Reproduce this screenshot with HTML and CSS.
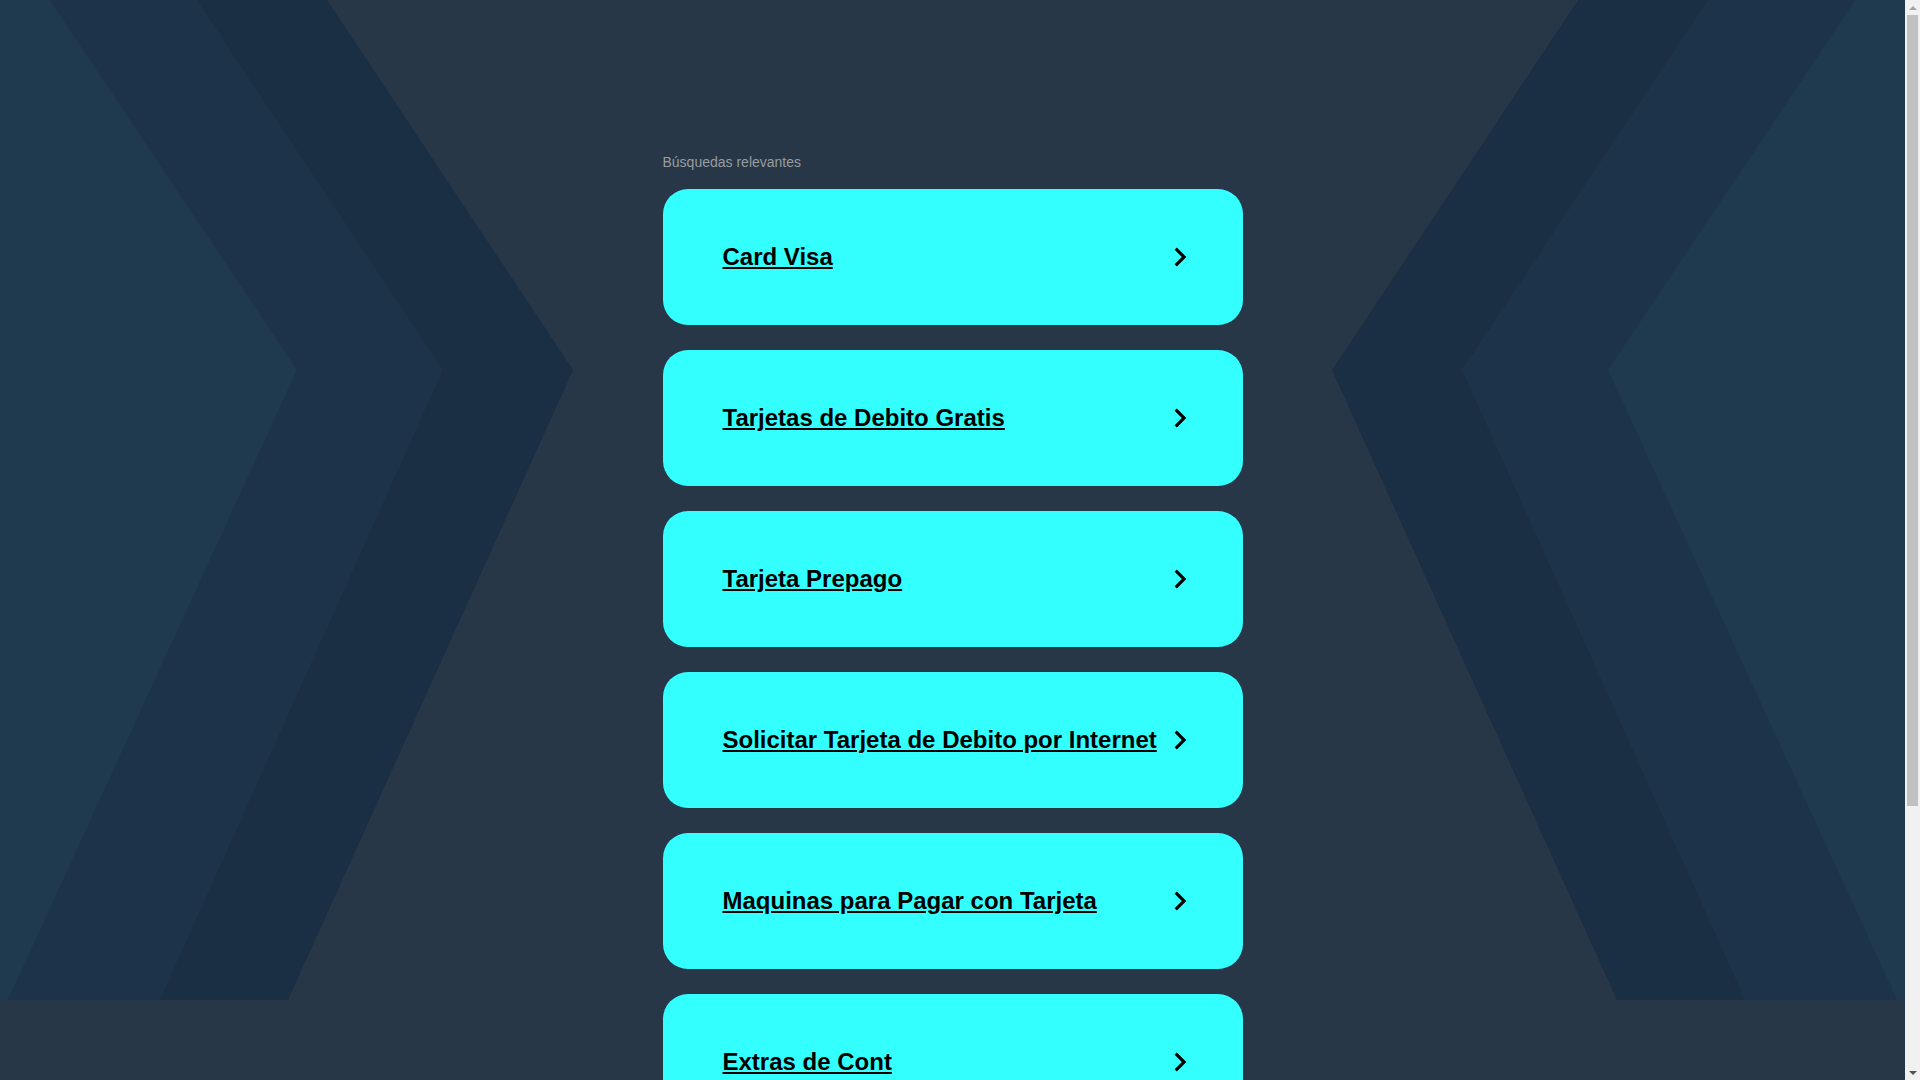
FILE: index.html
```html
<!DOCTYPE html>
<html lang="es">
<head>
<meta charset="utf-8">
<title>Búsquedas relevantes</title>
<link rel="stylesheet" href="styles.css">
</head>
<body>
<div class="backdrop" aria-hidden="true">
  <svg class="backdrop-svg" viewBox="0 0 1905 1000" preserveAspectRatio="none">
    <polygon class="band-dark" points="0,0 327,0 573,370 288,1000 0,1000"/>
    <polygon class="band-mid" points="0,0 197,0 443,370 160,1000 0,1000"/>
    <polygon class="band-light" points="0,0 50,0 297,370 8,1000 0,1000"/>
    <polygon class="band-dark" points="1905,0 1578,0 1332,370 1617,1000 1905,1000"/>
    <polygon class="band-mid" points="1905,0 1708,0 1462,370 1745,1000 1905,1000"/>
    <polygon class="band-light" points="1905,0 1855,0 1608,370 1897,1000 1905,1000"/>
  </svg>
</div>
<main class="page">
  <h2 class="heading">Búsquedas relevantes</h2>
  <ul class="results">
    <li><a class="card" href="#"><span class="label">Card Visa</span><svg class="chev" viewBox="0 0 24 24"><path d="M8.59 16.59L13.17 12 8.59 7.41 10 6l6 6-6 6-1.41-1.41z"/></svg></a></li>
    <li><a class="card" href="#"><span class="label">Tarjetas de Debito Gratis</span><svg class="chev" viewBox="0 0 24 24"><path d="M8.59 16.59L13.17 12 8.59 7.41 10 6l6 6-6 6-1.41-1.41z"/></svg></a></li>
    <li><a class="card" href="#"><span class="label">Tarjeta Prepago</span><svg class="chev" viewBox="0 0 24 24"><path d="M8.59 16.59L13.17 12 8.59 7.41 10 6l6 6-6 6-1.41-1.41z"/></svg></a></li>
    <li><a class="card" href="#"><span class="label">Solicitar Tarjeta de Debito por Internet</span><svg class="chev" viewBox="0 0 24 24"><path d="M8.59 16.59L13.17 12 8.59 7.41 10 6l6 6-6 6-1.41-1.41z"/></svg></a></li>
    <li><a class="card" href="#"><span class="label">Maquinas para Pagar con Tarjeta</span><svg class="chev" viewBox="0 0 24 24"><path d="M8.59 16.59L13.17 12 8.59 7.41 10 6l6 6-6 6-1.41-1.41z"/></svg></a></li>
    <li><a class="card" href="#"><span class="label">Extras de Cont</span><svg class="chev" viewBox="0 0 24 24"><path d="M8.59 16.59L13.17 12 8.59 7.41 10 6l6 6-6 6-1.41-1.41z"/></svg></a></li>
  </ul>
</main>
<div class="scrollbar" aria-hidden="true">
  <span class="sb-arrow sb-up"></span>
  <span class="sb-thumb"></span>
  <span class="sb-arrow sb-down"></span>
</div>
</body>
</html>
```
FILE: styles.css
```css
html, body {
  margin: 0;
  padding: 0;
}

html {
  background: #273747;
}

body {
  position: relative;
  margin-right: 15px;
  background: #273747;
  font-family: "Liberation Sans", Arial, sans-serif;
  color: #000;
}

.backdrop {
  position: absolute;
  top: 0;
  left: 0;
  width: 100%;
  height: 1000px;
  z-index: 0;
  overflow: hidden;
}

.backdrop-svg {
  display: block;
  width: 100%;
  height: 1000px;
}

.band-dark { fill: #1a2f43; }
.band-mid { fill: #1d3349; }
.band-light { fill: #1f394f; }

.page {
  position: relative;
  z-index: 1;
  width: 580px;
  margin: 0 auto;
  padding: 152px 0 304px;
}

.heading {
  margin: 0 0 17px;
  font-size: 14px;
  line-height: 20px;
  font-weight: normal;
  color: #989ca1;
}

.results {
  list-style: none;
  margin: 0;
  padding: 0;
  display: flex;
  flex-direction: column;
  gap: 25px;
}

.card {
  display: flex;
  align-items: center;
  height: 136px;
  box-sizing: border-box;
  padding: 0 44px 0 60px;
  background: #33ffff;
  border-radius: 25px;
  color: #000;
  text-decoration: none;
}

.label {
  flex: 1;
  min-width: 0;
  white-space: nowrap;
  font-size: 24px;
  font-weight: bold;
  text-decoration: underline;
  color: #000;
}

.chev {
  flex: none;
  width: 38px;
  height: 38px;
  fill: #000;
}

/* browser scrollbar as seen in the screenshot */
.scrollbar {
  position: fixed;
  top: 0;
  right: 0;
  bottom: 0;
  width: 15px;
  z-index: 10;
  background: #f1f1f1;
  display: flex;
  flex-direction: column;
  align-items: center;
}

.sb-arrow {
  flex: none;
  width: 15px;
  height: 15px;
  display: flex;
  align-items: center;
  justify-content: center;
}

.sb-up::before,
.sb-down::before {
  content: "";
  width: 0;
  height: 0;
  border-left: 4px solid transparent;
  border-right: 4px solid transparent;
}

.sb-up::before {
  border-bottom: 4px solid #a3a3a3;
}

.sb-down {
  margin-top: auto;
}

.sb-down::before {
  border-top: 4px solid #505050;
}

.sb-thumb {
  flex: none;
  width: 11px;
  height: 791px;
  background: #c1c1c1;
}
```
